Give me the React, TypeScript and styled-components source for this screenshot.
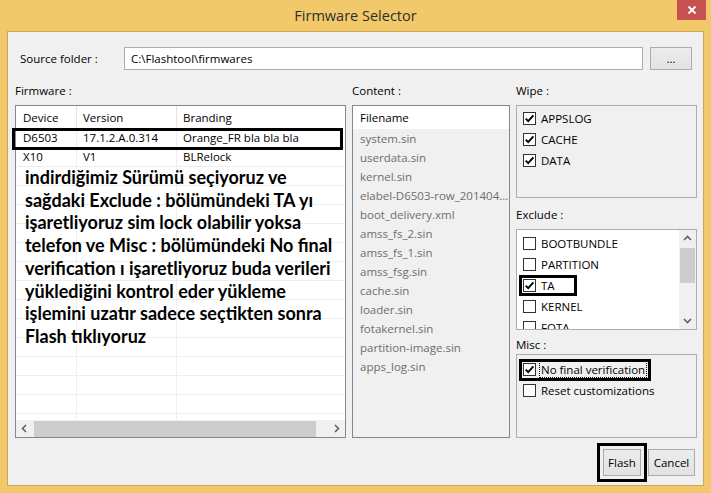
import styled, { createGlobalStyle } from 'styled-components';

const GlobalStyle = createGlobalStyle`
  html, body {
    margin: 0;
    padding: 0;
  }
  body {
    width: 711px;
    height: 493px;
    overflow: hidden;
    background: #f1c96b;
    font-family: "Open Sans", "Noto Sans", sans-serif;
    font-size: 11.5px;
    color: #000;
  }
`;

const Frame = styled.div`
  width: 711px;
  height: 493px;
  display: flex;
  flex-direction: column;
  background: #f1c96b;
`;

const TitleBar = styled.div`
  height: 31px;
  flex: none;
  display: grid;
  grid-template-columns: 1fr auto 1fr;
  align-items: start;
`;

const Title = styled.div`
  grid-column: 2;
  line-height: 31px;
  font-size: 14.5px;
  color: #2e2e2e;
`;

const CloseButton = styled.div`
  grid-column: 3;
  justify-self: end;
  width: 29px;
  height: 20px;
  margin-right: 5px;
  background: #c75050;
  display: flex;
  align-items: center;
  justify-content: center;
`;

const Client = styled.div`
  margin: 0 7px 7px;
  border: 1px solid #cfa656;
  background: #f0f0f0;
  flex: 1;
  display: flex;
  flex-direction: column;
  padding: 15px 0 9px;
`;

const SourceRow = styled.div`
  display: grid;
  grid-template-columns: 97px 1fr 42px;
  column-gap: 7px;
  margin: 0 11px 0 12px;
  height: 23px;
  align-items: center;
`;

const TextField = styled.div`
  height: 23px;
  box-sizing: border-box;
  border: 1px solid #abadb3;
  background: #fff;
  padding-left: 6px;
  line-height: 21px;
`;

const PushButton = styled.div<{ $w: number; $mark?: boolean }>`
  width: ${(p) => p.$w}px;
  height: 100%;
  box-sizing: border-box;
  border: 1px solid #acacac;
  background: linear-gradient(#ececec, #e2e2e2);
  display: flex;
  align-items: center;
  justify-content: center;
  outline: ${(p) => (p.$mark ? '3px solid #000' : 'none')};
  outline-offset: 3px;
`;

const Main = styled.div`
  margin-top: 12px;
  padding: 0 6px 0 7px;
  display: grid;
  grid-template-columns: 331px 158px 181px;
  column-gap: 6px;
  height: 356px;
`;

const Column = styled.div`
  position: relative;
  display: flex;
  flex-direction: column;
`;

const Label = styled.div<{ $top?: number; $bottom?: number }>`
  line-height: 18px;
  height: 18px;
  margin-top: ${(p) => p.$top ?? 0}px;
  margin-bottom: ${(p) => p.$bottom ?? 5}px;
`;

const ListBox = styled.div<{ $bg?: string }>`
  height: 333px;
  box-sizing: border-box;
  border: 1px solid #828790;
  background: ${(p) => p.$bg ?? '#fff'};
  display: flex;
  flex-direction: column;
  overflow: hidden;
`;

const HeaderRow = styled.div`
  display: grid;
  grid-template-columns: 61px 100px 1fr;
  height: 23px;
  flex: none;
  background: #fff;
`;

const HeaderCell = styled.div`
  border-right: 1px solid #e5e5e5;
  padding-left: 6px;
  line-height: 23px;
  &:first-child {
    padding-left: 7px;
  }
  &:last-child {
    border-right: none;
  }
`;

const Rows = styled.div`
  flex: 1;
  overflow: hidden;
`;

const Row = styled.div`
  display: grid;
  grid-template-columns: 61px 100px 1fr;
  height: 19px;
  box-sizing: border-box;
  border-bottom: 1px solid #eeeeee;
`;

const Cell = styled.div`
  border-right: 1px solid #eeeeee;
  padding-left: 6px;
  line-height: 18px;
  white-space: nowrap;
  &:first-child {
    padding-left: 7px;
  }
  &:last-child {
    border-right: none;
  }
`;

const HScroll = styled.div`
  height: 17px;
  flex: none;
  background: #f0f0f0;
  display: flex;
  align-items: stretch;
`;

const ScrollArrow = styled.div`
  width: 17px;
  height: 17px;
  flex: none;
  display: flex;
  align-items: center;
  justify-content: center;
`;

const HThumb = styled.div`
  width: 282px;
  margin: 1px 1px 0;
  background: #cdcdcd;
`;

const Track = styled.div`
  flex: 1;
`;

const Highlight = styled.div`
  position: absolute;
  left: -3px;
  top: 46px;
  width: 331px;
  height: 22px;
  box-sizing: border-box;
  border: 3px solid #000;
  pointer-events: none;
`;

const Note = styled.div`
  position: absolute;
  left: 10px;
  top: 84px;
  font-family: Lato, "Liberation Sans", sans-serif;
  font-weight: 700;
  font-size: 18px;
  line-height: 22.7px;
  color: #000;
  white-space: nowrap;
`;

const FileHeader = styled.div`
  height: 23px;
  flex: none;
  background: #fff;
  padding-left: 7px;
  line-height: 23px;
`;

const FileItem = styled.div`
  height: 19px;
  line-height: 19px;
  padding-left: 7px;
  color: #6d6d6d;
  white-space: nowrap;
`;

const GroupBox = styled.div<{ $h: number; $bg?: string; $pad: number }>`
  height: ${(p) => p.$h}px;
  box-sizing: border-box;
  border: 1px solid #abadb3;
  background: ${(p) => p.$bg ?? '#f0f0f0'};
  display: flex;
  overflow: hidden;
  padding-top: ${(p) => p.$pad}px;
`;

const CheckList = styled.div`
  flex: 1;
  padding-left: 6px;
  overflow: hidden;
`;

const CheckRow = styled.div<{ $mark?: number; $markH?: number }>`
  position: relative;
  display: flex;
  align-items: center;
  gap: 4px;
  height: 21px;
  white-space: nowrap;
  &::after {
    content: '';
    display: ${(p) => (p.$mark ? 'block' : 'none')};
    position: absolute;
    left: -4px;
    top: 0;
    width: ${(p) => p.$mark ?? 0}px;
    height: ${(p) => p.$markH ?? 21}px;
    box-sizing: border-box;
    border: 3px solid #000;
  }
`;

const Box = styled.span`
  width: 13px;
  height: 13px;
  box-sizing: border-box;
  border: 1px solid #333;
  background: #fff;
  display: inline-flex;
  align-items: center;
  justify-content: center;
  flex: none;
`;

const CheckText = styled.span<{ $focus?: boolean }>`
  line-height: 15px;
  padding: 0 1px;
  outline: ${(p) => (p.$focus ? '1px dotted #000' : 'none')};
`;

const VScroll = styled.div`
  width: 17px;
  flex: none;
  display: flex;
  flex-direction: column;
  margin-top: -3px;
  background: #f0f0f0;
`;

const VThumb = styled.div`
  height: 35px;
  margin: 1px 1px 0 1px;
  background: #cdcdcd;
`;

const Footer = styled.div`
  margin-top: 11px;
  height: 27px;
  display: flex;
  justify-content: flex-end;
  gap: 7px;
  padding-right: 8px;
`;

const Chevron = ({ dir }: { dir: 'up' | 'down' | 'left' | 'right' }) => {
  const paths = {
    up: 'M1 6 L4.5 2.5 L8 6',
    down: 'M1 3 L4.5 6.5 L8 3',
    left: 'M6 1 L2.5 4.5 L6 8',
    right: 'M3 1 L6.5 4.5 L3 8',
  };
  return (
    <svg width="9" height="9" viewBox="0 0 9 9">
      <path d={paths[dir]} fill="none" stroke="#606060" strokeWidth="1.6" />
    </svg>
  );
};

const CheckBox = ({ checked }: { checked?: boolean }) => (
  <Box>
    {checked && (
      <svg width="11" height="11" viewBox="0 0 11 11">
        <path d="M1.7 5.6 L4.2 8.2 L9.4 2.3" fill="none" stroke="#000" strokeWidth="1.9" />
      </svg>
    )}
  </Box>
);

const firmwares = [
  ['D6503', '17.1.2.A.0.314', 'Orange_FR bla bla bla'],
  ['X10', 'V1', 'BLRelock'],
];

const files = [
  'system.sin',
  'userdata.sin',
  'kernel.sin',
  'elabel-D6503-row_201404...',
  'boot_delivery.xml',
  'amss_fs_2.sin',
  'amss_fs_1.sin',
  'amss_fsg.sin',
  'cache.sin',
  'loader.sin',
  'fotakernel.sin',
  'partition-image.sin',
  'apps_log.sin',
];

const excludes = [
  { name: 'BOOTBUNDLE' },
  { name: 'PARTITION' },
  { name: 'TA', checked: true, mark: 58 },
  { name: 'KERNEL' },
  { name: 'FOTA' },
];

export default function App() {
  const rows = [...firmwares];
  while (rows.length < 16) rows.push(['', '', '']);

  return (
    <Frame>
      <GlobalStyle />
      <TitleBar>
        <Title>Firmware Selector</Title>
        <CloseButton>
          <svg width="10" height="10" viewBox="0 0 10 10">
            <path d="M1.5 1.5 L8.5 8.5 M8.5 1.5 L1.5 8.5" stroke="#fff" strokeWidth="1.8" />
          </svg>
        </CloseButton>
      </TitleBar>
      <Client>
        <SourceRow>
          <span>Source folder :</span>
          <TextField>C:\Flashtool\firmwares</TextField>
          <PushButton $w={42}>...</PushButton>
        </SourceRow>

        <Main>
          <Column>
            <Label>Firmware :</Label>
            <ListBox>
              <HeaderRow>
                <HeaderCell>Device</HeaderCell>
                <HeaderCell>Version</HeaderCell>
                <HeaderCell>Branding</HeaderCell>
              </HeaderRow>
              <Rows>
                {rows.map((r, i) => (
                  <Row key={i}>
                    <Cell>{r[0]}</Cell>
                    <Cell>{r[1]}</Cell>
                    <Cell>{r[2]}</Cell>
                  </Row>
                ))}
              </Rows>
              <HScroll>
                <ScrollArrow>
                  <Chevron dir="left" />
                </ScrollArrow>
                <HThumb />
                <Track />
                <ScrollArrow>
                  <Chevron dir="right" />
                </ScrollArrow>
              </HScroll>
            </ListBox>
            <Highlight />
            <Note>
              indirdiğimiz Sürümü seçiyoruz ve
              <br />
              sağdaki Exclude : bölümündeki TA yı
              <br />
              işaretliyoruz sim lock olabilir yoksa
              <br />
              telefon ve Misc : bölümündeki No final
              <br />
              verification ı işaretliyoruz buda verileri
              <br />
              yüklediğini kontrol eder yükleme
              <br />
              işlemini uzatır sadece seçtikten sonra
              <br />
              Flash tıklıyoruz
            </Note>
          </Column>

          <Column>
            <Label>Content :</Label>
            <ListBox $bg="#f0f0f0">
              <FileHeader>Filename</FileHeader>
              {files.map((f) => (
                <FileItem key={f}>{f}</FileItem>
              ))}
            </ListBox>
          </Column>

          <Column>
            <Label>Wipe :</Label>
            <GroupBox $h={93} $pad={2}>
              <CheckList>
                {['APPSLOG', 'CACHE', 'DATA'].map((w) => (
                  <CheckRow key={w}>
                    <CheckBox checked />
                    <CheckText>{w}</CheckText>
                  </CheckRow>
                ))}
              </CheckList>
            </GroupBox>

            <Label $top={8}>Exclude :</Label>
            <GroupBox $h={101} $pad={3} $bg="#fff">
              <CheckList>
                {excludes.map((e) => (
                  <CheckRow key={e.name} $mark={e.mark}>
                    <CheckBox checked={e.checked} />
                    <CheckText>{e.name}</CheckText>
                  </CheckRow>
                ))}
              </CheckList>
              <VScroll>
                <ScrollArrow>
                  <Chevron dir="up" />
                </ScrollArrow>
                <VThumb />
                <Track />
                <ScrollArrow>
                  <Chevron dir="down" />
                </ScrollArrow>
              </VScroll>
            </GroupBox>

            <Label $top={6} $bottom={0}>Misc :</Label>
            <GroupBox $h={84} $pad={4}>
              <CheckList>
                <CheckRow $mark={132} $markH={22}>
                  <CheckBox checked />
                  <CheckText $focus>No final verification</CheckText>
                </CheckRow>
                <CheckRow>
                  <CheckBox />
                  <CheckText>Reset customizations</CheckText>
                </CheckRow>
              </CheckList>
            </GroupBox>
          </Column>
        </Main>

        <Footer>
          <PushButton $w={38} $mark>Flash</PushButton>
          <PushButton $w={47}>Cancel</PushButton>
        </Footer>
      </Client>
    </Frame>
  );
}
